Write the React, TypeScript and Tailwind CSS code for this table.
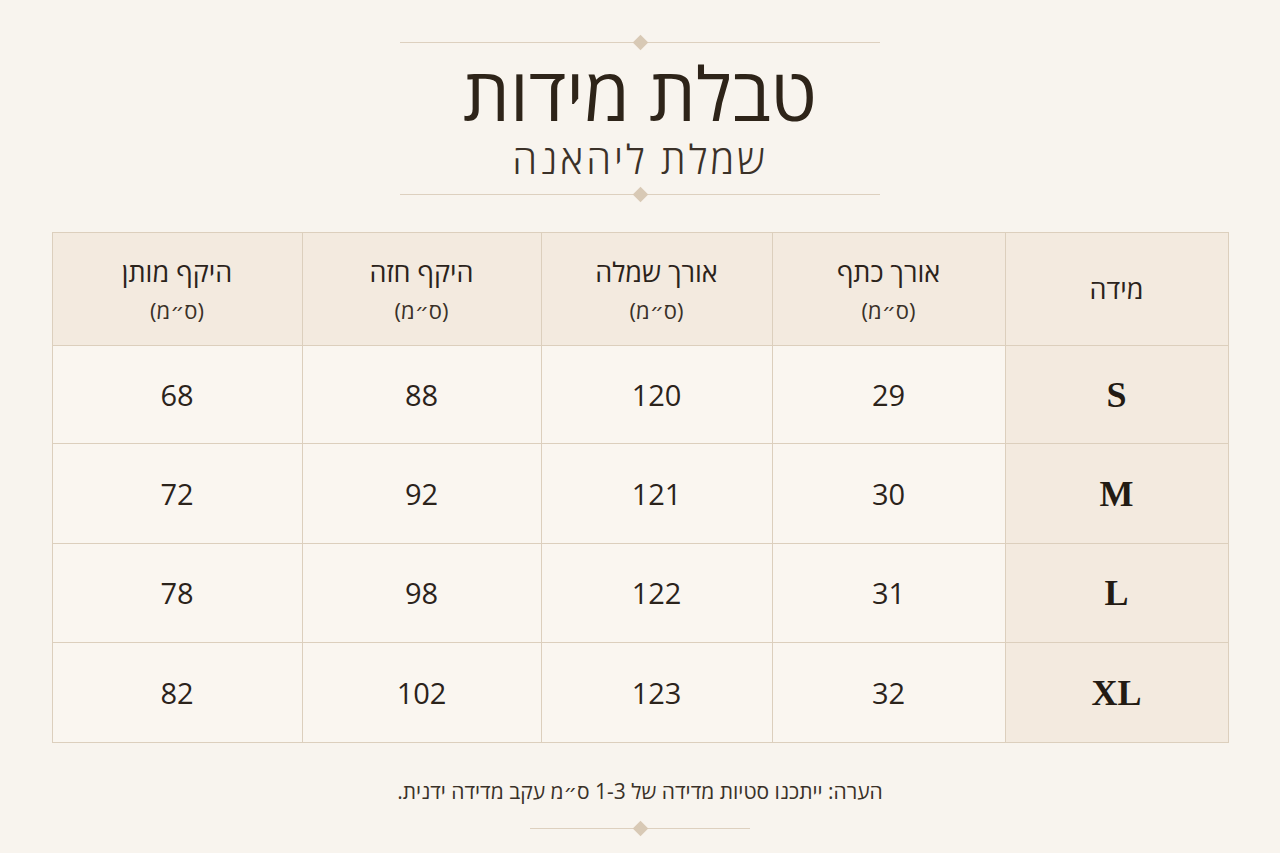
const rows = [
  { size: "S", shoulder: "29", length: "120", chest: "88", waist: "68" },
  { size: "M", shoulder: "30", length: "121", chest: "92", waist: "72" },
  { size: "L", shoulder: "31", length: "122", chest: "98", waist: "78" },
  { size: "XL", shoulder: "32", length: "123", chest: "102", waist: "82" },
];

function Divider({ width }: { width: string }) {
  return (
    <div className={`relative flex items-center justify-center ${width}`}>
      <div className="h-px w-full bg-[#ddd0bf]" />
      <div className="absolute h-[11px] w-[11px] rotate-45 bg-[#d8c9b5]" />
    </div>
  );
}

function Head({ title, unit }: { title: string; unit?: boolean }) {
  return (
    <th className="border border-[#dccfbd] bg-[#f3eadf] font-normal text-[#2b231b]">
      <div className="text-[27px] leading-[34px]">{title}</div>
      {unit && <div className="mt-[8px] text-[22px] leading-[26px] text-[#3a3128]">(ס״מ)</div>}
    </th>
  );
}

export default function App() {
  return (
    <main
      dir="rtl"
      className="flex min-h-[853px] w-full flex-col items-center bg-[#f8f4ee] text-[#2b231b]"
      style={{ fontFamily: '"Open Sans", "DejaVu Sans", sans-serif' }}
    >
      <div className="mt-[42px]">
        <Divider width="w-[480px]" />
      </div>
      <h1 className="mt-[12px] text-[74px] font-medium leading-[76px] text-[#2e2419]">טבלת מידות</h1>
      <h2 className="mt-[4px] text-[40px] font-light leading-[48px] tracking-[3px] text-[#3b3128]">שמלת ליהאנה</h2>
      <div className="mt-[11px]">
        <Divider width="w-[480px]" />
      </div>

      <table className="mt-[37px] w-[1176px] table-fixed border-collapse border border-[#dccfbd]">
        <colgroup>
          <col className="w-[223px]" />
          <col className="w-[233px]" />
          <col className="w-[231px]" />
          <col className="w-[239px]" />
          <col className="w-[250px]" />
        </colgroup>
        <thead>
          <tr className="h-[113px]">
            <Head title="מידה" />
            <Head title="אורך כתף" unit />
            <Head title="אורך שמלה" unit />
            <Head title="היקף חזה" unit />
            <Head title="היקף מותן" unit />
          </tr>
        </thead>
        <tbody>
          {rows.map((r, i) => (
            <tr key={r.size} className={i === 0 ? "h-[98px]" : i === 2 ? "h-[99px]" : "h-[100px]"}>
              <td
                className="border border-[#dccfbd] bg-[#f3eadf] text-center text-[36px] font-bold text-[#231b13]"
                style={{ fontFamily: '"Liberation Serif", serif' }}
              >
                {r.size}
              </td>
              <td className="border border-[#dccfbd] bg-[#faf6f0] text-center text-[29px]">{r.shoulder}</td>
              <td className="border border-[#dccfbd] bg-[#faf6f0] text-center text-[29px]">{r.length}</td>
              <td className="border border-[#dccfbd] bg-[#faf6f0] text-center text-[29px]">{r.chest}</td>
              <td className="border border-[#dccfbd] bg-[#faf6f0] text-center text-[29px]">{r.waist}</td>
            </tr>
          ))}
        </tbody>
      </table>

      <p className="mt-[33px] text-[21px] leading-[30px] text-[#3a3128]">
        הערה: ייתכנו סטיות מדידה של 1-3 ס״מ עקב מדידה ידנית.
      </p>
      <div className="mt-[22px]">
        <Divider width="w-[220px]" />
      </div>
    </main>
  );
}
